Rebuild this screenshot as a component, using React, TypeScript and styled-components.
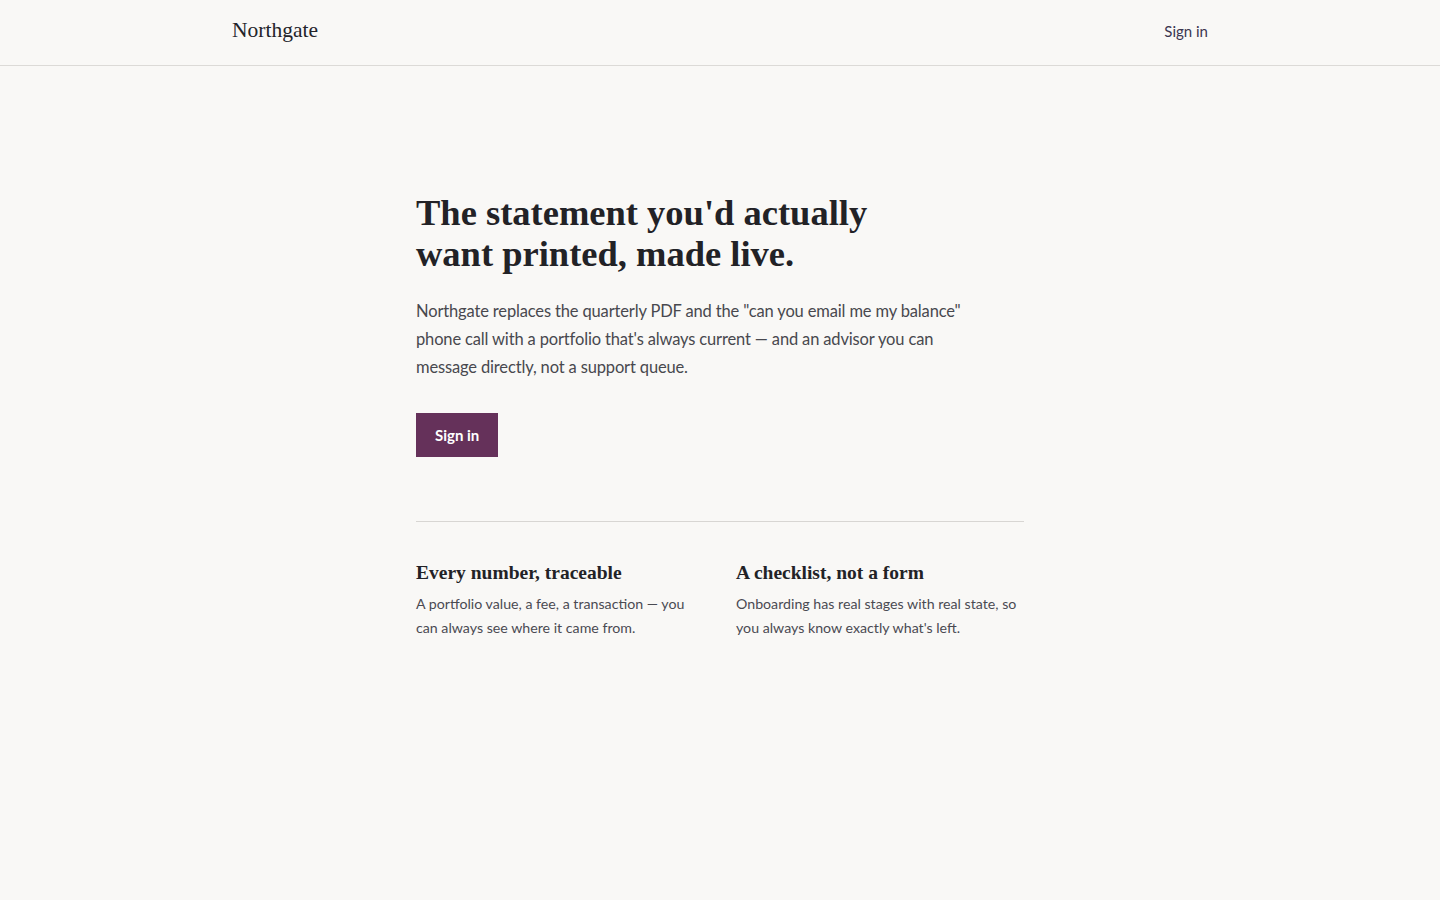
import styled, { createGlobalStyle } from 'styled-components';

const GlobalStyle = createGlobalStyle`
  html, body {
    margin: 0;
    padding: 0;
    background: #f9f8f6;
  }
  body {
    font-family: 'Lato', 'Noto Sans', sans-serif;
    color: #2a2a2e;
    -webkit-font-smoothing: antialiased;
  }
`;

const serif = `'Liberation Serif', 'DejaVu Serif', serif`;

const Page = styled.div`
  min-height: 100vh;
  background: #f9f8f6;
`;

const TopBar = styled.header`
  height: 65px;
  border-bottom: 1px solid #dcdad7;
`;

const TopBarInner = styled.div`
  box-sizing: border-box;
  width: 976px;
  height: 100%;
  margin: 0 auto;
  padding-bottom: 4px;
  display: flex;
  align-items: center;
  justify-content: space-between;
`;

const Brand = styled.a`
  font-family: ${serif};
  font-size: 21.5px;
  color: #24242a;
  text-decoration: none;
`;

const NavLink = styled.a`
  font-size: 15px;
  color: #3b3550;
  text-decoration: none;
`;

const Main = styled.main`
  width: 608px;
  margin: 0 auto;
  padding-top: 126px;
`;

const Headline = styled.h1`
  font-family: ${serif};
  font-weight: 700;
  font-size: 36.5px;
  line-height: 41px;
  color: #222226;
  margin: 0;
  max-width: 480px;
`;

const Lead = styled.p`
  font-size: 16.5px;
  letter-spacing: -0.15px;
  line-height: 28px;
  color: #48484e;
  margin: 23px 0 0;
  max-width: 560px;
`;

const Button = styled.button`
  margin-top: 32px;
  height: 44px;
  padding: 0 19px;
  border: none;
  background: #65315a;
  color: #ffffff;
  font-family: inherit;
  font-size: 15px;
  font-weight: 700;
  cursor: pointer;
`;

const Divider = styled.hr`
  border: none;
  border-top: 1px solid #d8d6d3;
  margin: 64px 0 0;
`;

const Features = styled.section`
  display: grid;
  grid-template-columns: 1fr 1fr;
  gap: 32px;
  padding-top: 39px;
`;

const Feature = styled.div``;

const FeatureTitle = styled.h2`
  font-family: ${serif};
  font-weight: 700;
  font-size: 19.5px;
  line-height: 24px;
  color: #222226;
  margin: 0;
`;

const FeatureText = styled.p`
  font-size: 14.2px;
  line-height: 24px;
  color: #4a4a52;
  margin: 7px 0 0;
`;

const features = [
  {
    title: 'Every number, traceable',
    text: 'A portfolio value, a fee, a transaction — you can always see where it came from.',
  },
  {
    title: 'A checklist, not a form',
    text: "Onboarding has real stages with real state, so you always know exactly what's left.",
  },
];

export default function App() {
  return (
    <Page>
      <GlobalStyle />
      <TopBar>
        <TopBarInner>
          <Brand href="#">Northgate</Brand>
          <NavLink href="#">Sign in</NavLink>
        </TopBarInner>
      </TopBar>
      <Main>
        <Headline>The statement you'd actually want printed, made live.</Headline>
        <Lead>
          Northgate replaces the quarterly PDF and the "can you email me my balance" phone call
          with a portfolio that's always current — and an advisor you can message directly, not a
          support queue.
        </Lead>
        <Button>Sign in</Button>
        <Divider />
        <Features>
          {features.map((f) => (
            <Feature key={f.title}>
              <FeatureTitle>{f.title}</FeatureTitle>
              <FeatureText>{f.text}</FeatureText>
            </Feature>
          ))}
        </Features>
      </Main>
    </Page>
  );
}
